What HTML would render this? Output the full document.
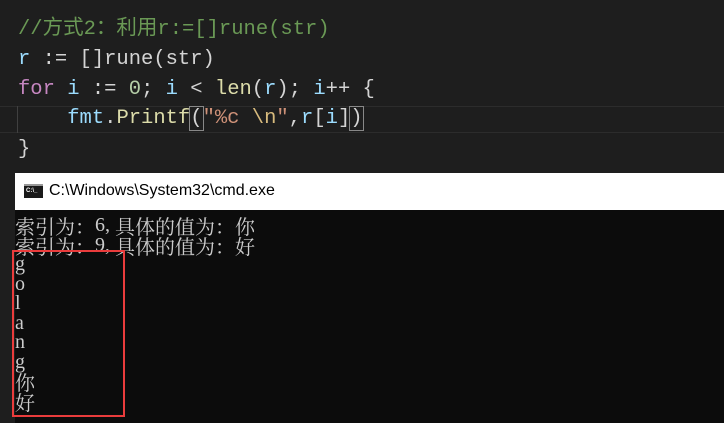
<!DOCTYPE html><html><head><meta charset="utf-8"><style>
body{margin:0;width:724px;height:423px;background:#1e1e1e;position:relative;overflow:hidden}
.code{position:absolute;left:18px;font:20.5px "Liberation Mono","Noto Sans CJK SC",monospace;color:#d4d4d4;white-space:pre;line-height:30px}
.c{color:#6a9955}.v{color:#9cdcfe}.k{color:#c586c0}.n{color:#b5cea8}.f{color:#dcdcaa}.s{color:#ce9178}.e{color:#d7ba7d}
.hl{position:absolute;left:0;right:0;top:106px;height:25px;border-top:1px solid #2c2c2c;border-bottom:1px solid #2c2c2c}
.guide{position:absolute;left:17px;top:106px;width:1px;height:27px;background:#404040}
.br{outline:1px solid #888;}
.title{position:absolute;left:15px;top:173px;right:0;height:37px;background:#fff;font:16px "Liberation Sans",sans-serif;color:#000}
.icon{position:absolute;left:9px;top:11px;width:19px;height:14px;background:#1a1a1a;border-top:2px solid #999;box-sizing:border-box;font:bold 6px "Liberation Sans";color:#fff;line-height:10px;padding-left:2px}
.body{position:absolute;left:15px;top:210px;right:0;bottom:0;background:#0c0c0c}
.t{position:absolute;left:15px;font:20px "Noto Serif CJK SC",serif;color:#cccccc;white-space:nowrap}
.t div{height:19.5px;line-height:19.5px;overflow:visible}
.h{display:inline-block;width:10px;font:20px "Liberation Serif",serif;line-height:19.5px;vertical-align:top}
.z{display:inline-block;line-height:19.5px;vertical-align:top}
.box{position:absolute;left:12px;top:250px;width:109px;height:163px;border:2px solid #ea3c3c}
</style></head><body>
<div class="hl"></div><div class="guide"></div>
<div class="code" style="top:15px"><span class="c">//方式2：利用r:=[]rune(str)</span></div>
<div class="code" style="top:45px"><span class="v">r</span> := []rune(str)</div>
<div class="code" style="top:75px"><span class="k">for</span> <span class="v">i</span> := <span class="n">0</span>; <span class="v">i</span> &lt; <span class="f">len</span>(<span class="v">r</span>); <span class="v">i</span>++ {</div>
<div class="code" style="top:104px">    <span class="v">fmt</span>.<span class="f">Printf</span><span class="br">(</span><span class="s">"%c </span><span class="e">\n</span><span class="s">"</span>,<span class="v">r</span>[<span class="v">i</span>]<span class="br">)</span></div>
<div class="code" style="top:135px">}</div>
<div class="title"><div class="icon">C:\_</div><span style="position:absolute;left:34px;top:9px">C:\Windows\System32\cmd.exe</span></div>
<div class="body"></div>
<div class="t" style="top:216px"><div><span class="z">索引为：</span><span class="h">6</span><span class="h">,</span><span class="z">具体的值为：你</span></div><div><span class="z">索引为：</span><span class="h">9</span><span class="h">,</span><span class="z">具体的值为：好</span></div><div><span class="h">g</span></div><div><span class="h">o</span></div><div><span class="h">l</span></div><div><span class="h">a</span></div><div><span class="h">n</span></div><div><span class="h">g</span></div><div><span class="z">你</span></div><div><span class="z">好</span></div></div>
<div class="box"></div>
</body></html>
